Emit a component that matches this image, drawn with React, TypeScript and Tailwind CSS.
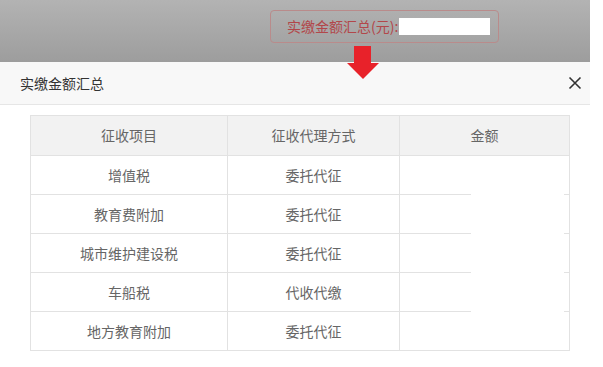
import React from "react";

type TaxRow = {
  item: string;
  mode: string;
  amount: string;
};

const rows: TaxRow[] = [
  { item: "增值税", mode: "委托代征", amount: "" },
  { item: "教育费附加", mode: "委托代征", amount: "" },
  { item: "城市维护建设税", mode: "委托代征", amount: "" },
  { item: "车船税", mode: "代收代缴", amount: "" },
  { item: "地方教育附加", mode: "委托代征", amount: "" },
];

const cell =
  "flex items-center justify-center border-r border-b border-[#e2e2e2] text-[14px] text-[#666]";

const App: React.FC = () => {
  return (
    <div
      className="relative w-[603px] h-[367px] overflow-hidden bg-white"
      style={{ fontFamily: '"Noto Sans CJK SC", "Noto Sans", sans-serif' }}
    >
      {/* page behind the dimmed mask */}
      <div className="w-[590px] h-[62px] bg-gradient-to-b from-[#b3b3b3] to-[#9d9d9d] flex">
        <div className="ml-[270px] mt-[10px] w-[229px] h-[33px] rounded-[4px] border border-[#b98b8b] flex items-center pl-[16px]">
          <span className="text-[14px] text-[#b2474a]">实缴金额汇总(元):</span>
          <div className="ml-[1px] w-[91px] h-[17px] bg-white" />
        </div>
      </div>

      {/* modal */}
      <div className="w-[590px] h-[305px] bg-white">
        <div className="h-[43px] bg-[#f8f8f8] border-b border-[#e6e6e6] flex items-center justify-between pl-[20px] pr-[7px]">
          <span className="text-[14px] text-[#333]">实缴金额汇总</span>
          <svg width="16" height="16" viewBox="0 0 16 16" className="text-[#333]">
            <path d="M2.5 2.5 L13.5 13.5 M13.5 2.5 L2.5 13.5" stroke="currentColor" strokeWidth="1.6" />
          </svg>
        </div>

        <div className="relative ml-[30px] mt-[10px] w-[540px] border-l border-t border-[#e2e2e2] grid grid-cols-[197px_172px_170px]">
          <div className={`${cell} h-[40px] bg-[#f2f2f2]`}>征收项目</div>
          <div className={`${cell} h-[40px] bg-[#f2f2f2]`}>征收代理方式</div>
          <div className={`${cell} h-[40px] bg-[#f2f2f2]`}>金额</div>
          {rows.map((r) => (
            <React.Fragment key={r.item}>
              <div className={`${cell} h-[39px]`}>{r.item}</div>
              <div className={`${cell} h-[39px]`}>{r.mode}</div>
              <div className={`${cell} h-[39px]`}>{r.amount}</div>
            </React.Fragment>
          ))}
          {/* blank amount area */}
          <div className="absolute left-[440px] top-[40px] w-[93px] h-[157px] bg-white" />
        </div>
      </div>

      {/* pointer arrow */}
      <svg
        className="absolute left-[346px] top-[46px]"
        width="34"
        height="34"
        viewBox="0 0 34 34"
      >
        <path d="M8 0 H25 V17 H33 L17 33 L1 17 H8 Z" fill="#e8222a" />
      </svg>
    </div>
  );
};

export default App;
